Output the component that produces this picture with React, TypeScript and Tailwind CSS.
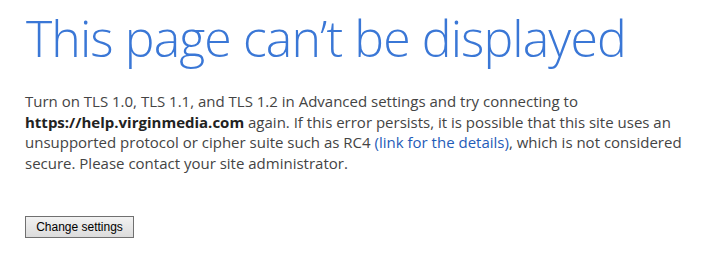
export default function App() {
  return (
    <div className="min-h-[254px] w-[724px] bg-white px-[25px] pt-[4px]" style={{ fontFamily: '"Open Sans", "Noto Sans", sans-serif' }}>
      <h1 className="ml-[1px] text-[50px] font-light leading-[68px] tracking-[-0.9px] text-[#3a77d6]">
        This page can’t be displayed
      </h1>
      <p className="mt-[19px] w-[680px] text-[15px] leading-[20.5px] text-[#444444]">
        Turn on TLS 1.0, TLS 1.1, and TLS 1.2 in Advanced settings and try connecting to{" "}
        <strong className="font-bold text-[#222222]">https://help.virginmedia.com</strong> again. If this error persists, it is possible that this site uses an unsupported protocol or cipher suite such as RC4{" "}
        <a href="#" className="text-[#1f5cb8]">(link for the details)</a>, which is not considered secure. Please contact your site administrator.
      </p>
      <button
        className="mt-[43px] h-[22px] w-[109px] border border-[#707070] bg-gradient-to-b from-[#f2f2f2] to-[#dcdcdc] text-[12px] text-black"
        style={{ fontFamily: '"Liberation Sans", Arial, sans-serif' }}
      >
        Change settings
      </button>
    </div>
  );
}
